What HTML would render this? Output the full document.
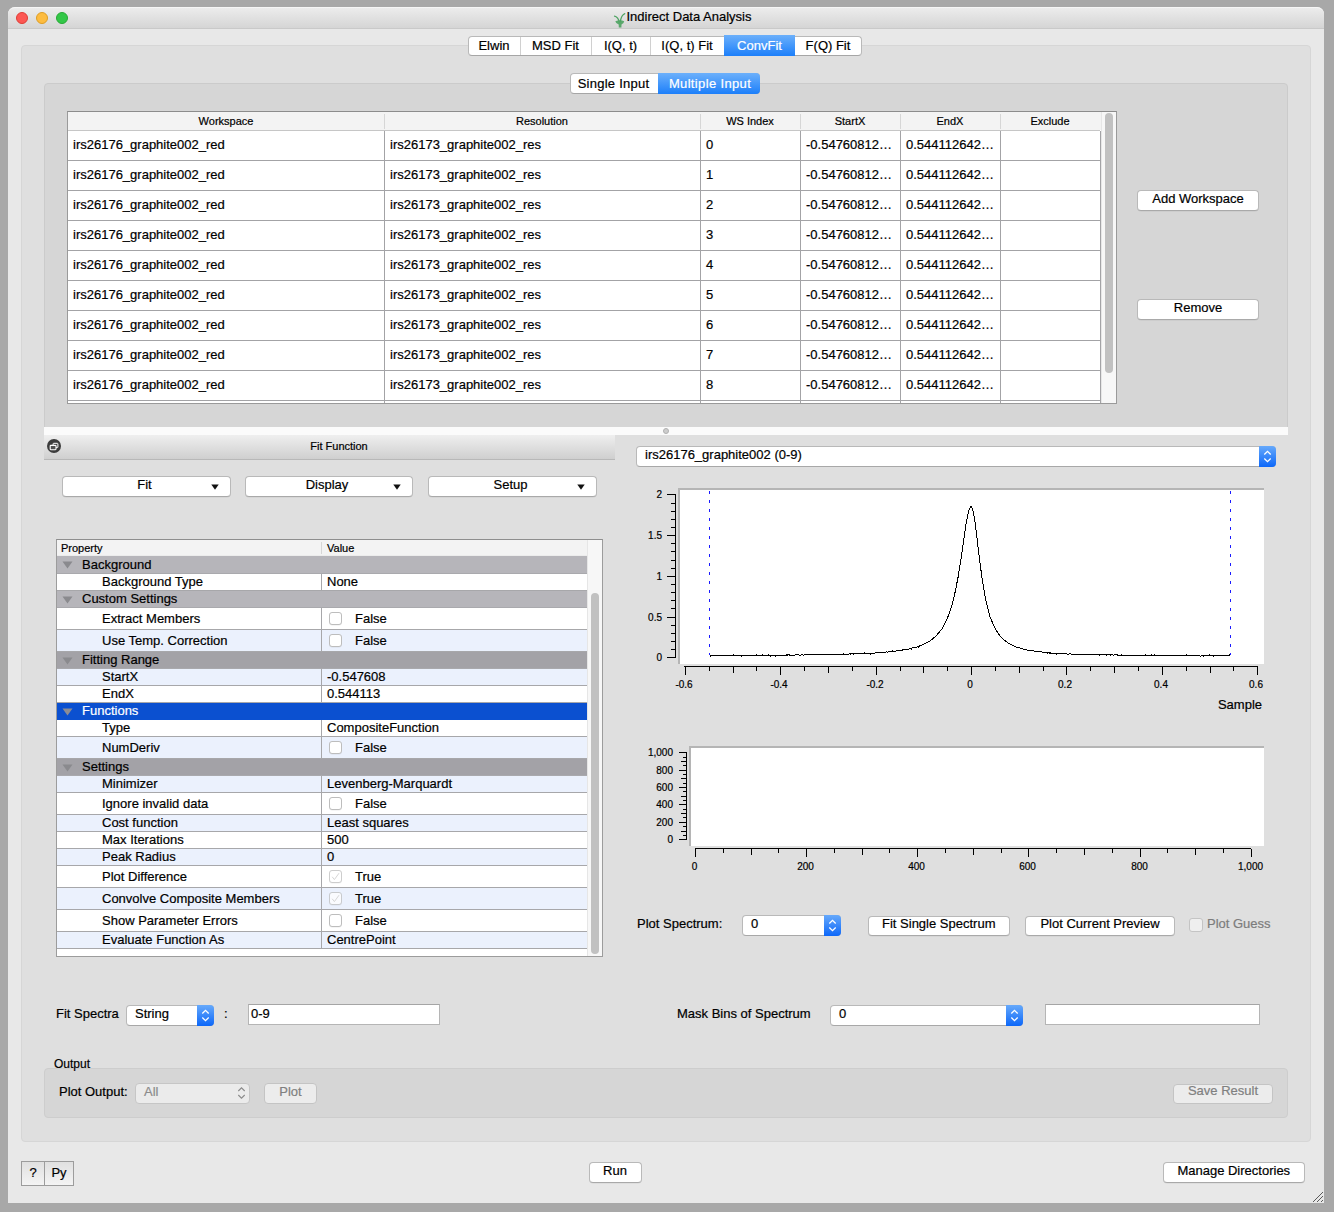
<!DOCTYPE html><html><head><meta charset="utf-8"><style>
html,body{margin:0;padding:0;}
body{width:1334px;height:1212px;background:#a8a8a8;position:relative;overflow:hidden;font-family:"Liberation Sans",sans-serif;color:#000;}
.a{position:absolute;box-sizing:border-box;}
.tx{white-space:nowrap;-webkit-text-stroke:0.2px currentColor;}
.btn{background:#fff;border:1px solid #b9b9b9;border-bottom-color:#a9a9a9;border-radius:4px;box-shadow:0 0.5px 0.5px rgba(0,0,0,0.08);}
.dbtn{background:#ececec;border:1px solid #c4c4c4;border-radius:4px;}
.cb{background:#fff;border:1px solid #b4b4b4;border-radius:3px;}
</style></head><body><div class="a " style="left:8px;top:7px;width:1316px;height:1196px;background:#e8e8e8;border-radius:7px 7px 0 0;"></div>
<div class="a " style="left:8px;top:7px;width:1316px;height:22px;background:linear-gradient(#ececec,#d5d5d5);border-radius:7px 7px 0 0;border-top:1px solid #f6f6f6;border-bottom:1px solid #c9c9c9;"></div>
<div class="a " style="left:16px;top:12px;width:12px;height:12px;background:#fc5753;border:0.5px solid #df3d35;border-radius:50%;"></div>
<div class="a " style="left:36px;top:12px;width:12px;height:12px;background:#fdbc40;border:0.5px solid #de9e25;border-radius:50%;"></div>
<div class="a " style="left:56px;top:12px;width:12px;height:12px;background:#33c748;border:0.5px solid #27aa35;border-radius:50%;"></div>
<svg class="a" style="left:613px;top:12px" width="14" height="17" viewBox="0 0 14 17"><g fill="none" stroke="#4fa463" stroke-width="1.2" stroke-linecap="round"><path d="M1.5 4.2 Q5 5 6.3 10"/><path d="M11.8 1.6 Q8.2 3 7.3 10"/></g><path d="M2.3 9.3 Q7 7.3 11.2 9.3 Q10.8 12 8.5 12.5 L8.4 15.6 L5.8 15.6 L5.7 12.5 Q3 12 2.3 9.3Z" fill="#4fa463" opacity="0.92"/></svg>
<div class="a tx" style="left:626.5px;top:9px;font-size:13px;line-height:15px;">Indirect Data Analysis</div>
<div class="a " style="left:21px;top:45px;width:1290px;height:1097px;background:#dfdfdf;border:1px solid #d6d6d6;border-radius:4px;"></div>
<div class="a " style="left:468px;top:36px;width:394px;height:20px;background:#fff;border:1px solid #b9b9b9;border-bottom-color:#a6a6a6;border-radius:4px;"></div>
<div class="a tx" style="left:194.0px;width:600px;text-align:center;top:38px;font-size:13px;line-height:15px;">Elwin</div>
<div class="a " style="left:520px;top:37px;width:1px;height:18px;background:#d0d0d0;"></div>
<div class="a tx" style="left:255.5px;width:600px;text-align:center;top:38px;font-size:13px;line-height:15px;">MSD Fit</div>
<div class="a " style="left:591px;top:37px;width:1px;height:18px;background:#d0d0d0;"></div>
<div class="a tx" style="left:320.5px;width:600px;text-align:center;top:38px;font-size:13px;line-height:15px;">I(Q, t)</div>
<div class="a " style="left:650px;top:37px;width:1px;height:18px;background:#d0d0d0;"></div>
<div class="a tx" style="left:387.0px;width:600px;text-align:center;top:38px;font-size:13px;line-height:15px;">I(Q, t) Fit</div>
<div class="a " style="left:724px;top:35px;width:71px;height:21px;background:linear-gradient(#6cb0fb,#1c7ffa);"></div>
<div class="a tx" style="left:459.5px;width:600px;text-align:center;top:38px;font-size:13px;line-height:15px;color:#fff">ConvFit</div>
<div class="a tx" style="left:528.0px;width:600px;text-align:center;top:38px;font-size:13px;line-height:15px;">F(Q) Fit</div>
<div class="a " style="left:44px;top:83px;width:1244px;height:350px;background:#d6d6d6;border:1px solid #cbcbcb;border-radius:4px;"></div>
<div class="a " style="left:570px;top:73px;width:190px;height:21px;background:#fff;border:1px solid #b9b9b9;border-bottom-color:#a6a6a6;border-radius:4px;"></div>
<div class="a " style="left:658px;top:73px;width:102px;height:21px;background:linear-gradient(#6cb0fb,#1c7ffa);border-radius:0 4px 4px 0;"></div>
<div class="a tx" style="left:313.5px;width:600px;text-align:center;top:76px;font-size:13px;line-height:15px;letter-spacing:0.25px">Single Input</div>
<div class="a tx" style="left:410px;width:600px;text-align:center;top:76px;font-size:13px;line-height:15px;color:#fff;letter-spacing:0.35px">Multiple Input</div>
<div class="a " style="left:67px;top:111px;width:1050px;height:293px;background:#fff;border:1px solid #9a9a9a;border-top-color:#8c8c8c;"></div>
<div class="a " style="left:68px;top:112px;width:1033px;height:18px;background:#f3f3f3;"></div>
<div class="a " style="left:68px;top:130px;width:1032px;height:1px;background:#c6c6c6;"></div>
<div class="a tx" style="left:-74.0px;width:600px;text-align:center;top:115px;font-size:11px;line-height:13px;">Workspace</div>
<div class="a tx" style="left:242.0px;width:600px;text-align:center;top:115px;font-size:11px;line-height:13px;">Resolution</div>
<div class="a tx" style="left:450.0px;width:600px;text-align:center;top:115px;font-size:11px;line-height:13px;">WS Index</div>
<div class="a tx" style="left:550.0px;width:600px;text-align:center;top:115px;font-size:11px;line-height:13px;">StartX</div>
<div class="a tx" style="left:650.0px;width:600px;text-align:center;top:115px;font-size:11px;line-height:13px;">EndX</div>
<div class="a tx" style="left:750.0px;width:600px;text-align:center;top:115px;font-size:11px;line-height:13px;">Exclude</div>
<div class="a " style="left:384px;top:114px;width:1px;height:15px;background:#d6d6d6;"></div>
<div class="a " style="left:700px;top:114px;width:1px;height:15px;background:#d6d6d6;"></div>
<div class="a " style="left:800px;top:114px;width:1px;height:15px;background:#d6d6d6;"></div>
<div class="a " style="left:900px;top:114px;width:1px;height:15px;background:#d6d6d6;"></div>
<div class="a " style="left:1000px;top:114px;width:1px;height:15px;background:#d6d6d6;"></div>
<div class="a " style="left:384px;top:131px;width:1px;height:272px;background:#a3a3a6;"></div>
<div class="a " style="left:700px;top:131px;width:1px;height:272px;background:#a3a3a6;"></div>
<div class="a " style="left:800px;top:131px;width:1px;height:272px;background:#a3a3a6;"></div>
<div class="a " style="left:900px;top:131px;width:1px;height:272px;background:#a3a3a6;"></div>
<div class="a " style="left:1000px;top:131px;width:1px;height:272px;background:#a3a3a6;"></div>
<div class="a " style="left:1100px;top:131px;width:1px;height:272px;background:#a3a3a6;"></div>
<div class="a " style="left:68px;top:160px;width:1032px;height:1px;background:#a3a3a6;"></div>
<div class="a " style="left:68px;top:190px;width:1032px;height:1px;background:#a3a3a6;"></div>
<div class="a " style="left:68px;top:220px;width:1032px;height:1px;background:#a3a3a6;"></div>
<div class="a " style="left:68px;top:250px;width:1032px;height:1px;background:#a3a3a6;"></div>
<div class="a " style="left:68px;top:280px;width:1032px;height:1px;background:#a3a3a6;"></div>
<div class="a " style="left:68px;top:310px;width:1032px;height:1px;background:#a3a3a6;"></div>
<div class="a " style="left:68px;top:340px;width:1032px;height:1px;background:#a3a3a6;"></div>
<div class="a " style="left:68px;top:370px;width:1032px;height:1px;background:#a3a3a6;"></div>
<div class="a " style="left:68px;top:400px;width:1032px;height:1px;background:#a3a3a6;"></div>
<div class="a tx" style="left:73px;top:137px;font-size:13px;line-height:15px;">irs26176_graphite002_red</div>
<div class="a tx" style="left:390px;top:137px;font-size:13px;line-height:15px;">irs26173_graphite002_res</div>
<div class="a tx" style="left:706px;top:137px;font-size:13px;line-height:15px;">0</div>
<div class="a tx" style="left:806px;top:137px;font-size:13px;line-height:15px;">-0.54760812…</div>
<div class="a tx" style="left:906px;top:137px;font-size:13px;line-height:15px;">0.544112642…</div>
<div class="a tx" style="left:73px;top:167px;font-size:13px;line-height:15px;">irs26176_graphite002_red</div>
<div class="a tx" style="left:390px;top:167px;font-size:13px;line-height:15px;">irs26173_graphite002_res</div>
<div class="a tx" style="left:706px;top:167px;font-size:13px;line-height:15px;">1</div>
<div class="a tx" style="left:806px;top:167px;font-size:13px;line-height:15px;">-0.54760812…</div>
<div class="a tx" style="left:906px;top:167px;font-size:13px;line-height:15px;">0.544112642…</div>
<div class="a tx" style="left:73px;top:197px;font-size:13px;line-height:15px;">irs26176_graphite002_red</div>
<div class="a tx" style="left:390px;top:197px;font-size:13px;line-height:15px;">irs26173_graphite002_res</div>
<div class="a tx" style="left:706px;top:197px;font-size:13px;line-height:15px;">2</div>
<div class="a tx" style="left:806px;top:197px;font-size:13px;line-height:15px;">-0.54760812…</div>
<div class="a tx" style="left:906px;top:197px;font-size:13px;line-height:15px;">0.544112642…</div>
<div class="a tx" style="left:73px;top:227px;font-size:13px;line-height:15px;">irs26176_graphite002_red</div>
<div class="a tx" style="left:390px;top:227px;font-size:13px;line-height:15px;">irs26173_graphite002_res</div>
<div class="a tx" style="left:706px;top:227px;font-size:13px;line-height:15px;">3</div>
<div class="a tx" style="left:806px;top:227px;font-size:13px;line-height:15px;">-0.54760812…</div>
<div class="a tx" style="left:906px;top:227px;font-size:13px;line-height:15px;">0.544112642…</div>
<div class="a tx" style="left:73px;top:257px;font-size:13px;line-height:15px;">irs26176_graphite002_red</div>
<div class="a tx" style="left:390px;top:257px;font-size:13px;line-height:15px;">irs26173_graphite002_res</div>
<div class="a tx" style="left:706px;top:257px;font-size:13px;line-height:15px;">4</div>
<div class="a tx" style="left:806px;top:257px;font-size:13px;line-height:15px;">-0.54760812…</div>
<div class="a tx" style="left:906px;top:257px;font-size:13px;line-height:15px;">0.544112642…</div>
<div class="a tx" style="left:73px;top:287px;font-size:13px;line-height:15px;">irs26176_graphite002_red</div>
<div class="a tx" style="left:390px;top:287px;font-size:13px;line-height:15px;">irs26173_graphite002_res</div>
<div class="a tx" style="left:706px;top:287px;font-size:13px;line-height:15px;">5</div>
<div class="a tx" style="left:806px;top:287px;font-size:13px;line-height:15px;">-0.54760812…</div>
<div class="a tx" style="left:906px;top:287px;font-size:13px;line-height:15px;">0.544112642…</div>
<div class="a tx" style="left:73px;top:317px;font-size:13px;line-height:15px;">irs26176_graphite002_red</div>
<div class="a tx" style="left:390px;top:317px;font-size:13px;line-height:15px;">irs26173_graphite002_res</div>
<div class="a tx" style="left:706px;top:317px;font-size:13px;line-height:15px;">6</div>
<div class="a tx" style="left:806px;top:317px;font-size:13px;line-height:15px;">-0.54760812…</div>
<div class="a tx" style="left:906px;top:317px;font-size:13px;line-height:15px;">0.544112642…</div>
<div class="a tx" style="left:73px;top:347px;font-size:13px;line-height:15px;">irs26176_graphite002_red</div>
<div class="a tx" style="left:390px;top:347px;font-size:13px;line-height:15px;">irs26173_graphite002_res</div>
<div class="a tx" style="left:706px;top:347px;font-size:13px;line-height:15px;">7</div>
<div class="a tx" style="left:806px;top:347px;font-size:13px;line-height:15px;">-0.54760812…</div>
<div class="a tx" style="left:906px;top:347px;font-size:13px;line-height:15px;">0.544112642…</div>
<div class="a tx" style="left:73px;top:377px;font-size:13px;line-height:15px;">irs26176_graphite002_red</div>
<div class="a tx" style="left:390px;top:377px;font-size:13px;line-height:15px;">irs26173_graphite002_res</div>
<div class="a tx" style="left:706px;top:377px;font-size:13px;line-height:15px;">8</div>
<div class="a tx" style="left:806px;top:377px;font-size:13px;line-height:15px;">-0.54760812…</div>
<div class="a tx" style="left:906px;top:377px;font-size:13px;line-height:15px;">0.544112642…</div>
<div class="a " style="left:1101px;top:112px;width:15px;height:291px;background:#f7f7f7;border-left:1px solid #e6e6e6;"></div>
<div class="a " style="left:1105px;top:113px;width:8px;height:260px;background:#c1c1c1;border-radius:4px;"></div>
<div class="a btn" style="left:1137px;top:190px;width:122px;height:21px;"></div>
<div class="a tx" style="left:898.0px;width:600px;text-align:center;top:191px;font-size:13px;line-height:15px;color:#000">Add Workspace</div>
<div class="a btn" style="left:1137px;top:299px;width:122px;height:21px;"></div>
<div class="a tx" style="left:898.0px;width:600px;text-align:center;top:300px;font-size:13px;line-height:15px;color:#000">Remove</div>
<div class="a " style="left:44px;top:427px;width:1244px;height:8px;background:#fbfbfb;"></div>
<div class="a " style="left:663px;top:428px;width:6px;height:6px;background:#cdcdcd;border-radius:50%;border:1px solid #b0b0b0;"></div>
<div class="a " style="left:44px;top:435px;width:571px;height:25px;background:linear-gradient(#efefef,#cfcfcf);border-bottom:1px solid #b8b8b8;"></div>
<svg class="a" style="left:46px;top:438px" width="16" height="16" viewBox="0 0 16 16"><circle cx="8" cy="8" r="7" fill="#3c3c3c"/><rect x="7.1" y="5.3" width="4.8" height="4.3" fill="none" stroke="#fff" stroke-width="1" rx="0.6"/><rect x="4.2" y="7.4" width="5.8" height="4.3" fill="#505050" stroke="#fff" stroke-width="1.1" rx="0.6"/></svg>
<div class="a tx" style="left:39px;width:600px;text-align:center;top:440px;font-size:11px;line-height:13px;">Fit Function</div>
<div class="a btn" style="left:62px;top:476px;width:169px;height:21px;"></div>
<div class="a tx" style="left:-155.5px;width:600px;text-align:center;top:477px;font-size:13px;line-height:15px;">Fit</div>
<svg class="a" style="left:211px;top:484px" width="8" height="6" viewBox="0 0 8 6"><path d="M0.3 0.5 L7.7 0.5 L4 5.8Z" fill="#111"/></svg>
<div class="a btn" style="left:245px;top:476px;width:168px;height:21px;"></div>
<div class="a tx" style="left:27.0px;width:600px;text-align:center;top:477px;font-size:13px;line-height:15px;">Display</div>
<svg class="a" style="left:393px;top:484px" width="8" height="6" viewBox="0 0 8 6"><path d="M0.3 0.5 L7.7 0.5 L4 5.8Z" fill="#111"/></svg>
<div class="a btn" style="left:428px;top:476px;width:169px;height:21px;"></div>
<div class="a tx" style="left:210.5px;width:600px;text-align:center;top:477px;font-size:13px;line-height:15px;">Setup</div>
<svg class="a" style="left:577px;top:484px" width="8" height="6" viewBox="0 0 8 6"><path d="M0.3 0.5 L7.7 0.5 L4 5.8Z" fill="#111"/></svg>
<div class="a " style="left:56px;top:539px;width:547px;height:418px;background:#fff;border:1px solid #9c9c9c;border-top-color:#8e8e8e;"></div>
<div class="a " style="left:57px;top:540px;width:530px;height:16px;background:#f3f3f3;border-bottom:1px solid #ececec;"></div>
<div class="a " style="left:321px;top:542px;width:1px;height:12px;background:#d6d6d6;"></div>
<div class="a tx" style="left:61px;top:542px;font-size:11px;line-height:13px;">Property</div>
<div class="a tx" style="left:327px;top:542px;font-size:11px;line-height:13px;">Value</div>
<div class="a " style="left:57px;top:556px;width:530px;height:18px;background:#b6b5ba;"></div>
<div class="a " style="left:57px;top:573px;width:530px;height:1px;background:#a9a9ad;"></div>
<svg class="a" style="left:62px;top:561px" width="11" height="8" viewBox="0 0 11 8"><path d="M0.5 0.5 L10.5 0.5 L5.5 7.5Z" fill="#8a8a8e"/></svg>
<div class="a tx" style="left:82px;top:557px;font-size:13px;line-height:15px;color:#000">Background</div>
<div class="a " style="left:57px;top:574px;width:530px;height:17px;background:#fff;"></div>
<div class="a " style="left:57px;top:590px;width:530px;height:1px;background:#a7a7aa;"></div>
<div class="a " style="left:321px;top:574px;width:1px;height:17px;background:#a7a7aa;"></div>
<div class="a tx" style="left:102px;top:574px;font-size:13px;line-height:15px;">Background Type</div>
<div class="a tx" style="left:327px;top:574px;font-size:13px;line-height:15px;">None</div>
<div class="a " style="left:57px;top:591px;width:530px;height:17px;background:#b6b5ba;"></div>
<div class="a " style="left:57px;top:607px;width:530px;height:1px;background:#a9a9ad;"></div>
<svg class="a" style="left:62px;top:596px" width="11" height="8" viewBox="0 0 11 8"><path d="M0.5 0.5 L10.5 0.5 L5.5 7.5Z" fill="#8a8a8e"/></svg>
<div class="a tx" style="left:82px;top:591px;font-size:13px;line-height:15px;color:#000">Custom Settings</div>
<div class="a " style="left:57px;top:608px;width:530px;height:22px;background:#fff;"></div>
<div class="a " style="left:57px;top:629px;width:530px;height:1px;background:#a7a7aa;"></div>
<div class="a " style="left:321px;top:608px;width:1px;height:22px;background:#a7a7aa;"></div>
<div class="a tx" style="left:102px;top:611px;font-size:13px;line-height:15px;">Extract Members</div>
<div class="a " style="left:329px;top:612px;width:13px;height:13px;background:#fff;border:1px solid #bdbdbd;border-radius:3px;box-shadow:0 0.5px 0 rgba(0,0,0,0.08);"></div>
<div class="a tx" style="left:355px;top:611px;font-size:13px;line-height:15px;">False</div>
<div class="a " style="left:57px;top:630px;width:530px;height:22px;background:#ebf1fd;"></div>
<div class="a " style="left:57px;top:651px;width:530px;height:1px;background:#a7a7aa;"></div>
<div class="a " style="left:321px;top:630px;width:1px;height:22px;background:#a7a7aa;"></div>
<div class="a tx" style="left:102px;top:633px;font-size:13px;line-height:15px;">Use Temp. Correction</div>
<div class="a " style="left:329px;top:634px;width:13px;height:13px;background:#fff;border:1px solid #bdbdbd;border-radius:3px;box-shadow:0 0.5px 0 rgba(0,0,0,0.08);"></div>
<div class="a tx" style="left:355px;top:633px;font-size:13px;line-height:15px;">False</div>
<div class="a " style="left:57px;top:652px;width:530px;height:17px;background:#a3a2a7;"></div>
<div class="a " style="left:57px;top:668px;width:530px;height:1px;background:#a9a9ad;"></div>
<svg class="a" style="left:62px;top:657px" width="11" height="8" viewBox="0 0 11 8"><path d="M0.5 0.5 L10.5 0.5 L5.5 7.5Z" fill="#8a8a8e"/></svg>
<div class="a tx" style="left:82px;top:652px;font-size:13px;line-height:15px;color:#000">Fitting Range</div>
<div class="a " style="left:57px;top:669px;width:530px;height:17px;background:#ebf1fd;"></div>
<div class="a " style="left:57px;top:685px;width:530px;height:1px;background:#a7a7aa;"></div>
<div class="a " style="left:321px;top:669px;width:1px;height:17px;background:#a7a7aa;"></div>
<div class="a tx" style="left:102px;top:669px;font-size:13px;line-height:15px;">StartX</div>
<div class="a tx" style="left:327px;top:669px;font-size:13px;line-height:15px;">-0.547608</div>
<div class="a " style="left:57px;top:686px;width:530px;height:17px;background:#fff;"></div>
<div class="a " style="left:57px;top:702px;width:530px;height:1px;background:#a7a7aa;"></div>
<div class="a " style="left:321px;top:686px;width:1px;height:17px;background:#a7a7aa;"></div>
<div class="a tx" style="left:102px;top:686px;font-size:13px;line-height:15px;">EndX</div>
<div class="a tx" style="left:327px;top:686px;font-size:13px;line-height:15px;">0.544113</div>
<div class="a " style="left:57px;top:703px;width:530px;height:17px;background:#0b50d0;"></div>
<svg class="a" style="left:62px;top:708px" width="11" height="8" viewBox="0 0 11 8"><path d="M0.5 0.5 L10.5 0.5 L5.5 7.5Z" fill="#8c8c94"/></svg>
<div class="a tx" style="left:82px;top:703px;font-size:13px;line-height:15px;color:#fff">Functions</div>
<div class="a " style="left:57px;top:720px;width:530px;height:17px;background:#fff;"></div>
<div class="a " style="left:57px;top:736px;width:530px;height:1px;background:#a7a7aa;"></div>
<div class="a " style="left:321px;top:720px;width:1px;height:17px;background:#a7a7aa;"></div>
<div class="a tx" style="left:102px;top:720px;font-size:13px;line-height:15px;">Type</div>
<div class="a tx" style="left:327px;top:720px;font-size:13px;line-height:15px;">CompositeFunction</div>
<div class="a " style="left:57px;top:737px;width:530px;height:22px;background:#ebf1fd;"></div>
<div class="a " style="left:57px;top:758px;width:530px;height:1px;background:#a7a7aa;"></div>
<div class="a " style="left:321px;top:737px;width:1px;height:22px;background:#a7a7aa;"></div>
<div class="a tx" style="left:102px;top:740px;font-size:13px;line-height:15px;">NumDeriv</div>
<div class="a " style="left:329px;top:741px;width:13px;height:13px;background:#fff;border:1px solid #bdbdbd;border-radius:3px;box-shadow:0 0.5px 0 rgba(0,0,0,0.08);"></div>
<div class="a tx" style="left:355px;top:740px;font-size:13px;line-height:15px;">False</div>
<div class="a " style="left:57px;top:759px;width:530px;height:17px;background:#a3a2a7;"></div>
<div class="a " style="left:57px;top:775px;width:530px;height:1px;background:#a9a9ad;"></div>
<svg class="a" style="left:62px;top:764px" width="11" height="8" viewBox="0 0 11 8"><path d="M0.5 0.5 L10.5 0.5 L5.5 7.5Z" fill="#8a8a8e"/></svg>
<div class="a tx" style="left:82px;top:759px;font-size:13px;line-height:15px;color:#000">Settings</div>
<div class="a " style="left:57px;top:776px;width:530px;height:17px;background:#ebf1fd;"></div>
<div class="a " style="left:57px;top:792px;width:530px;height:1px;background:#a7a7aa;"></div>
<div class="a " style="left:321px;top:776px;width:1px;height:17px;background:#a7a7aa;"></div>
<div class="a tx" style="left:102px;top:776px;font-size:13px;line-height:15px;">Minimizer</div>
<div class="a tx" style="left:327px;top:776px;font-size:13px;line-height:15px;">Levenberg-Marquardt</div>
<div class="a " style="left:57px;top:793px;width:530px;height:22px;background:#fff;"></div>
<div class="a " style="left:57px;top:814px;width:530px;height:1px;background:#a7a7aa;"></div>
<div class="a " style="left:321px;top:793px;width:1px;height:22px;background:#a7a7aa;"></div>
<div class="a tx" style="left:102px;top:796px;font-size:13px;line-height:15px;">Ignore invalid data</div>
<div class="a " style="left:329px;top:797px;width:13px;height:13px;background:#fff;border:1px solid #bdbdbd;border-radius:3px;box-shadow:0 0.5px 0 rgba(0,0,0,0.08);"></div>
<div class="a tx" style="left:355px;top:796px;font-size:13px;line-height:15px;">False</div>
<div class="a " style="left:57px;top:815px;width:530px;height:17px;background:#ebf1fd;"></div>
<div class="a " style="left:57px;top:831px;width:530px;height:1px;background:#a7a7aa;"></div>
<div class="a " style="left:321px;top:815px;width:1px;height:17px;background:#a7a7aa;"></div>
<div class="a tx" style="left:102px;top:815px;font-size:13px;line-height:15px;">Cost function</div>
<div class="a tx" style="left:327px;top:815px;font-size:13px;line-height:15px;">Least squares</div>
<div class="a " style="left:57px;top:832px;width:530px;height:17px;background:#fff;"></div>
<div class="a " style="left:57px;top:848px;width:530px;height:1px;background:#a7a7aa;"></div>
<div class="a " style="left:321px;top:832px;width:1px;height:17px;background:#a7a7aa;"></div>
<div class="a tx" style="left:102px;top:832px;font-size:13px;line-height:15px;">Max Iterations</div>
<div class="a tx" style="left:327px;top:832px;font-size:13px;line-height:15px;">500</div>
<div class="a " style="left:57px;top:849px;width:530px;height:17px;background:#ebf1fd;"></div>
<div class="a " style="left:57px;top:865px;width:530px;height:1px;background:#a7a7aa;"></div>
<div class="a " style="left:321px;top:849px;width:1px;height:17px;background:#a7a7aa;"></div>
<div class="a tx" style="left:102px;top:849px;font-size:13px;line-height:15px;">Peak Radius</div>
<div class="a tx" style="left:327px;top:849px;font-size:13px;line-height:15px;">0</div>
<div class="a " style="left:57px;top:866px;width:530px;height:22px;background:#fff;"></div>
<div class="a " style="left:57px;top:887px;width:530px;height:1px;background:#a7a7aa;"></div>
<div class="a " style="left:321px;top:866px;width:1px;height:22px;background:#a7a7aa;"></div>
<div class="a tx" style="left:102px;top:869px;font-size:13px;line-height:15px;">Plot Difference</div>
<div class="a " style="left:329px;top:870px;width:13px;height:13px;background:#fff;border:1px solid #bdbdbd;border-radius:3px;box-shadow:0 0.5px 0 rgba(0,0,0,0.08);opacity:0.75;"></div>
<svg class="a" style="left:330px;top:871px" width="11" height="11" viewBox="0 0 11 11"><path d="M2.2 5.8 L4.4 8.6 L9 2.2" fill="none" stroke="#d6d6d6" stroke-width="1"/></svg>
<div class="a tx" style="left:355px;top:869px;font-size:13px;line-height:15px;">True</div>
<div class="a " style="left:57px;top:888px;width:530px;height:22px;background:#ebf1fd;"></div>
<div class="a " style="left:57px;top:909px;width:530px;height:1px;background:#a7a7aa;"></div>
<div class="a " style="left:321px;top:888px;width:1px;height:22px;background:#a7a7aa;"></div>
<div class="a tx" style="left:102px;top:891px;font-size:13px;line-height:15px;">Convolve Composite Members</div>
<div class="a " style="left:329px;top:892px;width:13px;height:13px;background:#fff;border:1px solid #bdbdbd;border-radius:3px;box-shadow:0 0.5px 0 rgba(0,0,0,0.08);opacity:0.75;"></div>
<svg class="a" style="left:330px;top:893px" width="11" height="11" viewBox="0 0 11 11"><path d="M2.2 5.8 L4.4 8.6 L9 2.2" fill="none" stroke="#d6d6d6" stroke-width="1"/></svg>
<div class="a tx" style="left:355px;top:891px;font-size:13px;line-height:15px;">True</div>
<div class="a " style="left:57px;top:910px;width:530px;height:22px;background:#fff;"></div>
<div class="a " style="left:57px;top:931px;width:530px;height:1px;background:#a7a7aa;"></div>
<div class="a " style="left:321px;top:910px;width:1px;height:22px;background:#a7a7aa;"></div>
<div class="a tx" style="left:102px;top:913px;font-size:13px;line-height:15px;">Show Parameter Errors</div>
<div class="a " style="left:329px;top:914px;width:13px;height:13px;background:#fff;border:1px solid #bdbdbd;border-radius:3px;box-shadow:0 0.5px 0 rgba(0,0,0,0.08);"></div>
<div class="a tx" style="left:355px;top:913px;font-size:13px;line-height:15px;">False</div>
<div class="a " style="left:57px;top:932px;width:530px;height:17px;background:#ebf1fd;"></div>
<div class="a " style="left:57px;top:948px;width:530px;height:1px;background:#a7a7aa;"></div>
<div class="a " style="left:321px;top:932px;width:1px;height:17px;background:#a7a7aa;"></div>
<div class="a tx" style="left:102px;top:932px;font-size:13px;line-height:15px;">Evaluate Function As</div>
<div class="a tx" style="left:327px;top:932px;font-size:13px;line-height:15px;">CentrePoint</div>
<div class="a " style="left:587px;top:540px;width:15px;height:416px;background:#f7f7f7;border-left:1px solid #e6e6e6;"></div>
<div class="a " style="left:591px;top:593px;width:8px;height:361px;background:#c1c1c1;border-radius:4px;"></div>
<div class="a " style="left:636px;top:446px;width:640px;height:21px;background:#fff;border:1px solid #b9b9b9;border-bottom-color:#a8a8a8;border-radius:4px;"></div>
<div class="a " style="left:1259px;top:446px;width:17px;height:21px;background:linear-gradient(#66a9fb,#0c67f9);border-radius:0 4px 4px 0;"></div>
<svg class="a" style="left:1259px;top:446px" width="17" height="21" viewBox="0 0 17 21"><path d="M5.3 8.5 L8.5 5.3 L11.7 8.5 M5.3 12.5 L8.5 15.7 L11.7 12.5" fill="none" stroke="#fff" stroke-width="1.3"/></svg>
<div class="a tx" style="left:645px;top:447px;font-size:13px;line-height:15px;">irs26176_graphite002 (0-9)</div>
<div class="a " style="left:678px;top:488px;width:586px;height:176px;background:#fff;border-top:2px solid #b5b5b5;border-left:2px solid #b5b5b5;"></div>
<div class="a tx" style="left:362px;width:300px;text-align:right;top:652px;font-size:10px;line-height:12px;">0</div>
<div class="a tx" style="left:362px;width:300px;text-align:right;top:612px;font-size:10px;line-height:12px;">0.5</div>
<div class="a tx" style="left:362px;width:300px;text-align:right;top:571px;font-size:10px;line-height:12px;">1</div>
<div class="a tx" style="left:362px;width:300px;text-align:right;top:530px;font-size:10px;line-height:12px;">1.5</div>
<div class="a tx" style="left:362px;width:300px;text-align:right;top:489px;font-size:10px;line-height:12px;">2</div>
<div class="a tx" style="left:384px;width:600px;text-align:center;top:679px;font-size:10px;line-height:12px;">-0.6</div>
<div class="a tx" style="left:479px;width:600px;text-align:center;top:679px;font-size:10px;line-height:12px;">-0.4</div>
<div class="a tx" style="left:575px;width:600px;text-align:center;top:679px;font-size:10px;line-height:12px;">-0.2</div>
<div class="a tx" style="left:670px;width:600px;text-align:center;top:679px;font-size:10px;line-height:12px;">0</div>
<div class="a tx" style="left:765px;width:600px;text-align:center;top:679px;font-size:10px;line-height:12px;">0.2</div>
<div class="a tx" style="left:861px;width:600px;text-align:center;top:679px;font-size:10px;line-height:12px;">0.4</div>
<div class="a tx" style="left:956px;width:600px;text-align:center;top:679px;font-size:10px;line-height:12px;">0.6</div>
<div class="a tx" style="left:962px;width:300px;text-align:right;top:697px;font-size:13px;line-height:15px;">Sample</div>
<svg class="a" style="left:0;top:0" width="1334" height="1212" viewBox="0 0 1334 1212" shape-rendering="crispEdges"><line x1="675.5" y1="493.9" x2="675.5" y2="657.9" stroke="#000" stroke-width="1"/><line x1="667.0" y1="657.5" x2="675.5" y2="657.5" stroke="#000" stroke-width="1"/><line x1="671.0" y1="649.5" x2="675.5" y2="649.5" stroke="#000" stroke-width="1"/><line x1="671.0" y1="641.5" x2="675.5" y2="641.5" stroke="#000" stroke-width="1"/><line x1="671.0" y1="633.5" x2="675.5" y2="633.5" stroke="#000" stroke-width="1"/><line x1="671.0" y1="625.5" x2="675.5" y2="625.5" stroke="#000" stroke-width="1"/><line x1="667.0" y1="617.5" x2="675.5" y2="617.5" stroke="#000" stroke-width="1"/><line x1="671.0" y1="608.5" x2="675.5" y2="608.5" stroke="#000" stroke-width="1"/><line x1="671.0" y1="600.5" x2="675.5" y2="600.5" stroke="#000" stroke-width="1"/><line x1="671.0" y1="592.5" x2="675.5" y2="592.5" stroke="#000" stroke-width="1"/><line x1="671.0" y1="584.5" x2="675.5" y2="584.5" stroke="#000" stroke-width="1"/><line x1="667.0" y1="576.5" x2="675.5" y2="576.5" stroke="#000" stroke-width="1"/><line x1="671.0" y1="568.5" x2="675.5" y2="568.5" stroke="#000" stroke-width="1"/><line x1="671.0" y1="560.5" x2="675.5" y2="560.5" stroke="#000" stroke-width="1"/><line x1="671.0" y1="551.5" x2="675.5" y2="551.5" stroke="#000" stroke-width="1"/><line x1="671.0" y1="543.5" x2="675.5" y2="543.5" stroke="#000" stroke-width="1"/><line x1="667.0" y1="535.5" x2="675.5" y2="535.5" stroke="#000" stroke-width="1"/><line x1="671.0" y1="527.5" x2="675.5" y2="527.5" stroke="#000" stroke-width="1"/><line x1="671.0" y1="519.5" x2="675.5" y2="519.5" stroke="#000" stroke-width="1"/><line x1="671.0" y1="511.5" x2="675.5" y2="511.5" stroke="#000" stroke-width="1"/><line x1="671.0" y1="503.5" x2="675.5" y2="503.5" stroke="#000" stroke-width="1"/><line x1="667.0" y1="494.5" x2="675.5" y2="494.5" stroke="#000" stroke-width="1"/><line x1="684.46" y1="666.5" x2="1257.74" y2="666.5" stroke="#000" stroke-width="1"/><line x1="685.5" y1="666.5" x2="685.5" y2="674.5" stroke="#000" stroke-width="1"/><line x1="709.5" y1="666.5" x2="709.5" y2="670.5" stroke="#000" stroke-width="1"/><line x1="733.5" y1="666.5" x2="733.5" y2="672.5" stroke="#000" stroke-width="1"/><line x1="756.5" y1="666.5" x2="756.5" y2="670.5" stroke="#000" stroke-width="1"/><line x1="780.5" y1="666.5" x2="780.5" y2="674.5" stroke="#000" stroke-width="1"/><line x1="804.5" y1="666.5" x2="804.5" y2="670.5" stroke="#000" stroke-width="1"/><line x1="828.5" y1="666.5" x2="828.5" y2="672.5" stroke="#000" stroke-width="1"/><line x1="852.5" y1="666.5" x2="852.5" y2="670.5" stroke="#000" stroke-width="1"/><line x1="876.5" y1="666.5" x2="876.5" y2="674.5" stroke="#000" stroke-width="1"/><line x1="900.5" y1="666.5" x2="900.5" y2="670.5" stroke="#000" stroke-width="1"/><line x1="923.5" y1="666.5" x2="923.5" y2="672.5" stroke="#000" stroke-width="1"/><line x1="947.5" y1="666.5" x2="947.5" y2="670.5" stroke="#000" stroke-width="1"/><line x1="971.5" y1="666.5" x2="971.5" y2="674.5" stroke="#000" stroke-width="1"/><line x1="995.5" y1="666.5" x2="995.5" y2="670.5" stroke="#000" stroke-width="1"/><line x1="1019.5" y1="666.5" x2="1019.5" y2="672.5" stroke="#000" stroke-width="1"/><line x1="1043.5" y1="666.5" x2="1043.5" y2="670.5" stroke="#000" stroke-width="1"/><line x1="1066.5" y1="666.5" x2="1066.5" y2="674.5" stroke="#000" stroke-width="1"/><line x1="1090.5" y1="666.5" x2="1090.5" y2="670.5" stroke="#000" stroke-width="1"/><line x1="1114.5" y1="666.5" x2="1114.5" y2="672.5" stroke="#000" stroke-width="1"/><line x1="1138.5" y1="666.5" x2="1138.5" y2="670.5" stroke="#000" stroke-width="1"/><line x1="1162.5" y1="666.5" x2="1162.5" y2="674.5" stroke="#000" stroke-width="1"/><line x1="1186.5" y1="666.5" x2="1186.5" y2="670.5" stroke="#000" stroke-width="1"/><line x1="1210.5" y1="666.5" x2="1210.5" y2="672.5" stroke="#000" stroke-width="1"/><line x1="1233.5" y1="666.5" x2="1233.5" y2="670.5" stroke="#000" stroke-width="1"/><line x1="1257.5" y1="666.5" x2="1257.5" y2="674.5" stroke="#000" stroke-width="1"/></svg>
<svg class="a" style="left:0;top:0" width="1334" height="1212" viewBox="0 0 1334 1212"><polyline fill="none" stroke="#000" stroke-width="1" shape-rendering="optimizeSpeed" points="709.9,655.6 710.5,655.6 711.0,656.4 711.5,655.4 712.0,655.6 712.6,655.5 713.1,655.5 713.6,655.6 714.1,655.4 714.7,655.4 715.2,655.6 715.7,655.5 716.2,655.6 716.8,655.5 717.3,655.4 717.8,655.4 718.3,655.4 718.9,655.3 719.4,655.6 719.9,655.6 720.4,655.5 721.0,655.5 721.5,655.5 722.0,655.4 722.5,655.3 723.1,655.3 723.6,655.3 724.1,655.6 724.6,655.3 725.2,655.4 725.7,655.6 726.2,655.4 726.7,655.6 727.3,655.3 727.8,655.4 728.3,655.6 728.8,655.4 729.4,655.6 729.9,655.6 730.4,655.5 730.9,655.3 731.5,655.3 732.0,655.6 732.5,655.6 733.0,655.5 733.6,654.8 734.1,655.5 734.6,655.3 735.1,655.4 735.7,655.4 736.2,655.4 736.7,655.3 737.2,655.4 737.8,655.5 738.3,655.3 738.8,655.6 739.3,655.2 739.9,655.1 740.4,655.4 740.9,655.4 741.4,656.2 741.9,655.3 742.5,655.5 743.0,655.4 743.5,655.4 744.0,655.4 744.6,655.4 745.1,655.2 745.6,655.3 746.1,655.5 746.7,655.5 747.2,655.4 747.7,655.5 748.2,655.4 748.8,655.4 749.3,655.5 749.8,655.3 750.3,655.4 750.9,655.5 751.4,655.4 751.9,655.2 752.4,655.4 753.0,655.3 753.5,655.4 754.0,655.4 754.5,655.4 755.1,655.4 755.6,655.4 756.1,654.6 756.6,655.2 757.2,655.3 757.7,655.2 758.2,655.2 758.7,655.2 759.3,655.4 759.8,655.2 760.3,655.4 760.8,655.4 761.4,655.2 761.9,655.2 762.4,654.8 762.9,655.4 763.5,655.2 764.0,655.3 764.5,655.2 765.0,655.3 765.6,655.3 766.1,655.3 766.6,655.2 767.1,655.4 767.7,655.1 768.2,654.9 768.7,655.6 769.2,655.3 769.8,655.3 770.3,656.0 770.8,655.3 771.3,655.4 771.9,655.1 772.4,655.2 772.9,655.3 773.4,655.2 773.9,655.2 774.5,655.3 775.0,655.2 775.5,655.9 776.0,655.2 776.6,655.1 777.1,655.1 777.6,655.2 778.1,655.2 778.7,655.2 779.2,655.2 779.7,655.1 780.2,655.3 780.8,655.2 781.3,655.0 781.8,655.0 782.3,655.2 782.9,655.3 783.4,655.1 783.9,655.0 784.4,655.0 785.0,655.2 785.5,655.3 786.0,655.8 786.5,655.2 787.1,654.5 787.6,655.2 788.1,655.0 788.6,654.9 789.2,654.5 789.7,655.1 790.2,655.2 790.7,655.3 791.3,655.0 791.8,655.1 792.3,655.1 792.8,655.0 793.4,655.1 793.9,655.1 794.4,655.2 794.9,654.9 795.5,654.9 796.0,654.9 796.5,654.9 797.0,655.0 797.6,654.9 798.1,655.1 798.6,654.8 799.1,655.0 799.7,655.1 800.2,655.1 800.7,655.0 801.2,654.9 801.8,655.0 802.3,655.0 802.8,654.9 803.3,655.1 803.9,655.0 804.4,655.0 804.9,654.8 805.4,654.7 805.9,654.9 806.5,654.8 807.0,654.9 807.5,654.8 808.0,654.9 808.6,654.7 809.1,654.9 809.6,654.8 810.1,654.7 810.7,654.9 811.2,654.9 811.7,654.8 812.2,654.7 812.8,654.7 813.3,654.8 813.8,654.9 814.3,654.7 814.9,654.8 815.4,655.0 815.9,654.8 816.4,654.8 817.0,654.6 817.5,654.7 818.0,654.8 818.5,654.8 819.1,654.6 819.6,654.6 820.1,654.6 820.6,654.8 821.2,654.6 821.7,654.7 822.2,654.5 822.7,654.6 823.3,654.6 823.8,654.6 824.3,654.6 824.8,654.6 825.4,654.7 825.9,654.5 826.4,654.4 826.9,654.6 827.5,654.5 828.0,654.5 828.5,654.6 829.0,654.7 829.6,654.4 830.1,654.4 830.6,654.6 831.1,654.4 831.7,654.6 832.2,654.5 832.7,654.5 833.2,654.4 833.8,654.3 834.3,654.5 834.8,654.5 835.3,654.3 835.9,654.5 836.4,654.3 836.9,654.3 837.4,654.5 837.9,654.4 838.5,654.3 839.0,654.4 839.5,654.5 840.0,654.2 840.6,654.3 841.1,654.2 841.6,654.1 842.1,654.3 842.7,654.2 843.2,653.6 843.7,654.1 844.2,654.2 844.8,654.3 845.3,654.3 845.8,654.1 846.3,654.1 846.9,654.0 847.4,654.0 847.9,654.2 848.4,654.1 849.0,653.9 849.5,653.9 850.0,654.1 850.5,654.0 851.1,653.9 851.6,654.0 852.1,653.8 852.6,653.9 853.2,653.9 853.7,654.6 854.2,654.0 854.7,653.8 855.3,653.9 855.8,653.9 856.3,653.7 856.8,653.9 857.4,653.7 857.9,653.8 858.4,653.7 858.9,653.9 859.5,653.6 860.0,653.7 860.5,653.7 861.0,653.6 861.6,653.7 862.1,653.7 862.6,653.8 863.1,653.6 863.7,653.6 864.2,652.6 864.7,653.5 865.2,653.4 865.8,653.4 866.3,653.1 866.8,653.4 867.3,653.3 867.9,653.4 868.4,653.4 868.9,653.2 869.4,653.4 869.9,653.0 870.5,654.1 871.0,654.1 871.5,653.1 872.0,653.2 872.6,653.1 873.1,652.9 873.6,653.1 874.1,652.9 874.7,653.1 875.2,652.8 875.7,652.9 876.2,652.8 876.8,652.9 877.3,652.7 877.8,652.7 878.3,652.7 878.9,652.7 879.4,652.6 879.9,652.7 880.4,652.5 881.0,652.5 881.5,652.6 882.0,652.6 882.5,652.3 883.1,652.5 883.6,652.2 884.1,652.1 884.6,652.2 885.2,652.1 885.7,652.4 886.2,651.9 886.7,652.0 887.3,652.1 887.8,652.7 888.3,651.8 888.8,652.0 889.4,651.6 889.9,651.7 890.4,651.6 890.9,651.5 891.5,651.7 892.0,651.6 892.5,650.7 893.0,651.5 893.6,651.5 894.1,651.4 894.6,651.2 895.1,651.1 895.7,651.1 896.2,651.0 896.7,650.8 897.2,650.8 897.8,650.8 898.3,651.0 898.8,650.6 899.3,650.5 899.9,650.5 900.4,650.5 900.9,650.2 901.4,650.3 901.9,650.3 902.5,650.0 903.0,649.9 903.5,649.9 904.0,649.8 904.6,649.6 905.1,649.5 905.6,649.5 906.1,649.3 906.7,649.4 907.2,649.4 907.7,649.1 908.2,649.0 908.8,649.1 909.3,648.9 909.8,648.8 910.3,648.5 910.9,648.6 911.4,649.0 911.9,648.1 912.4,647.9 913.0,647.8 913.5,647.9 914.0,647.7 914.5,647.5 915.1,647.3 915.6,647.2 916.1,647.0 916.6,647.0 917.2,646.9 917.7,646.6 918.2,647.1 918.7,646.1 919.3,645.9 919.8,646.3 920.3,645.8 920.8,645.4 921.4,645.4 921.9,645.1 922.4,644.8 922.9,644.7 923.5,644.3 924.0,644.0 924.5,643.9 925.0,643.5 925.6,643.3 926.1,643.1 926.6,642.6 927.1,642.4 927.7,642.2 928.2,641.8 928.7,641.6 929.2,641.3 929.8,641.0 930.3,640.4 930.8,640.2 931.3,639.9 931.9,639.5 932.4,639.2 932.9,638.6 933.4,638.1 933.9,637.6 934.5,637.5 935.0,636.8 935.5,636.4 936.0,635.7 936.6,635.3 937.1,634.8 937.6,634.0 938.1,633.7 938.7,633.1 939.2,632.2 939.7,631.7 940.2,630.8 940.8,630.3 941.3,629.6 941.8,629.1 942.3,628.0 942.9,627.0 943.4,626.1 943.9,625.4 944.4,624.6 945.0,623.3 945.5,622.8 946.0,621.0 946.5,619.9 947.1,618.7 947.6,617.5 948.1,616.4 948.6,615.0 949.2,613.4 949.7,612.2 950.2,610.5 950.7,609.0 951.3,607.0 951.8,605.5 952.3,603.6 952.8,602.1 953.4,599.4 953.9,597.3 954.4,595.3 954.9,592.9 955.5,590.9 956.0,587.9 956.5,585.3 957.0,582.6 957.6,579.8 958.1,577.0 958.6,573.7 959.1,570.8 959.7,567.3 960.2,564.1 960.7,560.8 961.2,557.2 961.8,553.0 962.3,549.8 962.8,546.2 963.3,542.5 963.9,538.9 964.4,535.4 964.9,531.8 965.4,528.3 965.9,525.0 966.5,521.6 967.0,518.7 967.5,516.2 968.0,513.8 968.6,511.6 969.1,509.9 969.6,508.5 970.1,507.5 970.7,506.9 971.2,506.6 971.7,507.2 972.2,508.4 972.8,509.8 973.3,512.2 973.8,514.8 974.3,517.9 974.9,521.4 975.4,525.2 975.9,529.2 976.4,533.5 977.0,537.8 977.5,542.2 978.0,546.6 978.5,551.2 979.1,555.4 979.6,559.9 980.1,563.9 980.6,567.8 981.2,571.7 981.7,575.4 982.2,579.2 982.7,582.7 983.3,585.9 983.8,588.9 984.3,592.1 984.8,594.8 985.4,597.6 985.9,600.2 986.4,602.6 986.9,604.8 987.5,606.9 988.0,608.9 988.5,611.0 989.0,612.7 989.6,614.5 990.1,617.0 990.6,617.7 991.1,619.1 991.7,620.7 992.2,621.9 992.7,623.3 993.2,624.6 993.8,625.8 994.3,626.7 994.8,627.9 995.3,628.7 995.9,629.6 996.4,630.4 996.9,631.4 997.4,632.3 997.9,633.1 998.5,633.7 999.0,634.4 999.5,635.0 1000.0,636.0 1000.6,636.4 1001.1,636.9 1001.6,637.4 1002.1,638.2 1002.7,638.6 1003.2,639.2 1003.7,639.6 1004.2,640.1 1004.8,640.5 1005.3,641.0 1005.8,641.2 1006.3,641.8 1006.9,642.1 1007.4,642.5 1007.9,642.9 1008.4,643.1 1009.0,643.4 1009.5,643.7 1010.0,644.0 1010.5,644.5 1011.1,644.5 1011.6,644.9 1012.1,645.0 1012.6,645.5 1013.2,645.5 1013.7,645.7 1014.2,646.2 1014.7,646.4 1015.3,646.5 1015.8,646.7 1016.3,647.0 1016.8,647.0 1017.4,647.3 1017.9,647.4 1018.4,647.8 1018.9,647.8 1019.5,647.9 1020.0,648.2 1020.5,648.2 1021.0,648.2 1021.6,648.6 1022.1,648.8 1022.6,649.0 1023.1,649.0 1023.7,649.3 1024.2,649.4 1024.7,649.5 1025.2,649.6 1025.8,649.6 1026.3,649.9 1026.8,650.0 1027.3,650.1 1027.9,650.1 1028.4,650.1 1028.9,650.8 1029.4,650.5 1029.9,650.6 1030.5,650.6 1031.0,650.8 1031.5,650.9 1032.0,650.8 1032.6,651.0 1033.1,650.9 1033.6,651.0 1034.1,651.1 1034.7,651.3 1035.2,651.2 1035.7,651.3 1036.2,651.4 1036.8,651.5 1037.3,651.5 1037.8,651.7 1038.3,651.8 1038.9,651.9 1039.4,651.8 1039.9,652.1 1040.4,651.9 1041.0,652.0 1041.5,651.9 1042.0,652.1 1042.5,652.3 1043.1,652.2 1043.6,652.4 1044.1,652.2 1044.6,652.4 1045.2,652.6 1045.7,652.4 1046.2,652.7 1046.7,652.6 1047.3,653.6 1047.8,652.6 1048.3,652.7 1048.8,652.7 1049.4,653.2 1049.9,652.8 1050.4,653.0 1050.9,653.0 1051.5,653.1 1052.0,653.0 1052.5,653.1 1053.0,653.1 1053.6,653.1 1054.1,653.2 1054.6,653.2 1055.1,653.3 1055.7,653.2 1056.2,654.3 1056.7,653.4 1057.2,653.3 1057.8,653.3 1058.3,653.4 1058.8,653.4 1059.3,653.0 1059.9,653.5 1060.4,653.4 1060.9,653.5 1061.4,653.7 1061.9,653.7 1062.5,653.5 1063.0,653.7 1063.5,653.8 1064.0,653.8 1064.6,653.9 1065.1,653.6 1065.6,653.9 1066.1,653.9 1066.7,653.9 1067.2,654.0 1067.7,654.0 1068.2,654.0 1068.8,654.0 1069.3,653.9 1069.8,653.9 1070.3,653.9 1070.9,653.9 1071.4,654.7 1071.9,654.0 1072.4,654.1 1073.0,654.1 1073.5,654.1 1074.0,654.3 1074.5,654.1 1075.1,654.2 1075.6,654.2 1076.1,654.1 1076.6,654.2 1077.2,654.8 1077.7,654.2 1078.2,654.3 1078.7,654.4 1079.3,654.3 1079.8,654.2 1080.3,654.4 1080.8,654.5 1081.4,654.3 1081.9,654.3 1082.4,654.5 1082.9,654.5 1083.5,654.4 1084.0,654.5 1084.5,654.4 1085.0,654.4 1085.6,654.6 1086.1,654.4 1086.6,654.3 1087.1,654.4 1087.7,654.4 1088.2,654.6 1088.7,654.4 1089.2,654.5 1089.8,654.6 1090.3,654.4 1090.8,654.7 1091.3,654.5 1091.9,654.7 1092.4,654.5 1092.9,654.8 1093.4,654.7 1093.9,654.5 1094.5,654.8 1095.0,654.8 1095.5,654.5 1096.0,654.6 1096.6,654.8 1097.1,654.7 1097.6,654.8 1098.1,654.8 1098.7,654.6 1099.2,655.1 1099.7,654.9 1100.2,654.6 1100.8,654.6 1101.3,654.9 1101.8,654.9 1102.3,654.9 1102.9,654.7 1103.4,654.7 1103.9,654.8 1104.4,654.7 1105.0,654.9 1105.5,654.8 1106.0,655.0 1106.5,655.0 1107.1,654.9 1107.6,654.9 1108.1,655.0 1108.6,654.9 1109.2,655.0 1109.7,654.8 1110.2,654.8 1110.7,655.1 1111.3,654.8 1111.8,655.0 1112.3,654.8 1112.8,655.0 1113.4,655.1 1113.9,655.0 1114.4,655.0 1114.9,654.9 1115.5,654.8 1116.0,654.9 1116.5,654.9 1117.0,655.2 1117.6,654.9 1118.1,654.9 1118.6,655.2 1119.1,655.2 1119.7,655.1 1120.2,655.0 1120.7,655.0 1121.2,655.1 1121.8,654.9 1122.3,655.2 1122.8,655.2 1123.3,655.2 1123.9,655.0 1124.4,655.0 1124.9,655.0 1125.4,655.1 1125.9,655.7 1126.5,655.1 1127.0,655.2 1127.5,655.3 1128.0,655.2 1128.6,655.1 1129.1,655.1 1129.6,655.0 1130.1,655.3 1130.7,655.0 1131.2,655.2 1131.7,655.1 1132.2,655.2 1132.8,655.1 1133.3,655.3 1133.8,655.1 1134.3,655.2 1134.9,655.2 1135.4,655.3 1135.9,655.2 1136.4,655.1 1137.0,655.2 1137.5,655.2 1138.0,655.2 1138.5,655.2 1139.1,655.3 1139.6,655.3 1140.1,655.4 1140.6,655.3 1141.2,655.4 1141.7,655.4 1142.2,655.9 1142.7,655.4 1143.3,655.3 1143.8,655.3 1144.3,655.2 1144.8,655.5 1145.4,654.7 1145.9,655.4 1146.4,655.3 1146.9,655.3 1147.5,655.3 1148.0,655.5 1148.5,655.4 1149.0,656.3 1149.6,655.4 1150.1,655.2 1150.6,655.4 1151.1,654.8 1151.7,655.4 1152.2,655.5 1152.7,655.4 1153.2,655.2 1153.8,655.5 1154.3,654.5 1154.8,655.2 1155.3,655.3 1155.9,655.2 1156.4,655.4 1156.9,655.5 1157.4,655.5 1157.9,655.4 1158.5,655.3 1159.0,655.7 1159.5,655.4 1160.0,655.3 1160.6,655.3 1161.1,655.3 1161.6,655.4 1162.1,655.3 1162.7,655.4 1163.2,655.5 1163.7,655.6 1164.2,655.4 1164.8,655.4 1165.3,655.3 1165.8,655.4 1166.3,655.3 1166.9,655.3 1167.4,655.3 1167.9,655.5 1168.4,655.4 1169.0,655.4 1169.5,655.3 1170.0,655.5 1170.5,655.4 1171.1,655.4 1171.6,655.4 1172.1,655.5 1172.6,655.3 1173.2,655.5 1173.7,655.4 1174.2,655.4 1174.7,655.4 1175.3,655.5 1175.8,655.5 1176.3,655.4 1176.8,655.6 1177.4,655.3 1177.9,655.5 1178.4,655.6 1178.9,655.4 1179.5,655.5 1180.0,655.6 1180.5,655.6 1181.0,655.4 1181.6,655.4 1182.1,655.5 1182.6,655.4 1183.1,655.4 1183.7,655.3 1184.2,655.7 1184.7,655.4 1185.2,655.6 1185.8,655.6 1186.3,654.6 1186.8,655.7 1187.3,655.4 1187.9,655.5 1188.4,655.5 1188.9,655.4 1189.4,655.5 1189.9,655.6 1190.5,655.4 1191.0,655.7 1191.5,655.6 1192.0,655.6 1192.6,655.4 1193.1,655.4 1193.6,655.4 1194.1,655.6 1194.7,655.6 1195.2,655.7 1195.7,655.5 1196.2,655.4 1196.8,655.6 1197.3,655.6 1197.8,655.6 1198.3,655.6 1198.9,655.6 1199.4,655.7 1199.9,655.5 1200.4,656.3 1201.0,656.3 1201.5,655.5 1202.0,655.5 1202.5,655.6 1203.1,655.5 1203.6,656.4 1204.1,655.7 1204.6,655.7 1205.2,655.6 1205.7,655.5 1206.2,655.5 1206.7,655.7 1207.3,655.5 1207.8,655.5 1208.3,655.6 1208.8,655.7 1209.4,655.5 1209.9,654.5 1210.4,655.7 1210.9,655.5 1211.5,655.6 1212.0,655.7 1212.5,655.7 1213.0,654.7 1213.6,656.1 1214.1,655.8 1214.6,655.5 1215.1,655.6 1215.7,655.5 1216.2,655.6 1216.7,655.7 1217.2,655.7 1217.8,655.7 1218.3,655.6 1218.8,655.7 1219.3,655.6 1219.9,655.6 1220.4,655.7 1220.9,655.6 1221.4,655.6 1221.9,655.6 1222.5,655.6 1223.0,655.6 1223.5,655.5 1224.0,655.5 1224.6,655.6 1225.1,656.1 1225.6,655.5 1226.1,655.6 1226.7,655.7 1227.2,655.6 1227.7,655.6 1228.2,655.7 1228.8,655.6 1229.3,654.6 1229.8,655.6 1230.3,655.7"/><line x1="709.5" y1="491" x2="709.5" y2="655" stroke="#1a1aff" stroke-width="1" stroke-dasharray="3,6"/><line x1="1230.5" y1="491" x2="1230.5" y2="655" stroke="#1a1aff" stroke-width="1" stroke-dasharray="3,6"/></svg>
<div class="a " style="left:689px;top:746px;width:575px;height:100px;background:#fff;border-top:2px solid #b5b5b5;border-left:2px solid #b5b5b5;"></div>
<div class="a tx" style="left:373px;width:300px;text-align:right;top:834px;font-size:10px;line-height:12px;">0</div>
<div class="a tx" style="left:373px;width:300px;text-align:right;top:817px;font-size:10px;line-height:12px;">200</div>
<div class="a tx" style="left:373px;width:300px;text-align:right;top:799px;font-size:10px;line-height:12px;">400</div>
<div class="a tx" style="left:373px;width:300px;text-align:right;top:782px;font-size:10px;line-height:12px;">600</div>
<div class="a tx" style="left:373px;width:300px;text-align:right;top:765px;font-size:10px;line-height:12px;">800</div>
<div class="a tx" style="left:373px;width:300px;text-align:right;top:747px;font-size:10px;line-height:12px;">1,000</div>
<div class="a tx" style="left:394.5px;width:600px;text-align:center;top:861px;font-size:10px;line-height:12px;">0</div>
<div class="a tx" style="left:505.5px;width:600px;text-align:center;top:861px;font-size:10px;line-height:12px;">200</div>
<div class="a tx" style="left:616.5px;width:600px;text-align:center;top:861px;font-size:10px;line-height:12px;">400</div>
<div class="a tx" style="left:727.5px;width:600px;text-align:center;top:861px;font-size:10px;line-height:12px;">600</div>
<div class="a tx" style="left:839.5px;width:600px;text-align:center;top:861px;font-size:10px;line-height:12px;">800</div>
<div class="a tx" style="left:950.5px;width:600px;text-align:center;top:861px;font-size:10px;line-height:12px;">1,000</div>
<svg class="a" style="left:0;top:0" width="1334" height="1212" viewBox="0 0 1334 1212" shape-rendering="crispEdges"><line x1="686.5" y1="751.8000000000001" x2="686.5" y2="839.7" stroke="#000" stroke-width="1"/><line x1="678.5" y1="839.5" x2="686.5" y2="839.5" stroke="#000" stroke-width="1"/><line x1="682.5" y1="835.5" x2="686.5" y2="835.5" stroke="#000" stroke-width="1"/><line x1="680.5" y1="831.5" x2="686.5" y2="831.5" stroke="#000" stroke-width="1"/><line x1="682.5" y1="826.5" x2="686.5" y2="826.5" stroke="#000" stroke-width="1"/><line x1="678.5" y1="822.5" x2="686.5" y2="822.5" stroke="#000" stroke-width="1"/><line x1="682.5" y1="817.5" x2="686.5" y2="817.5" stroke="#000" stroke-width="1"/><line x1="680.5" y1="813.5" x2="686.5" y2="813.5" stroke="#000" stroke-width="1"/><line x1="682.5" y1="809.5" x2="686.5" y2="809.5" stroke="#000" stroke-width="1"/><line x1="678.5" y1="804.5" x2="686.5" y2="804.5" stroke="#000" stroke-width="1"/><line x1="682.5" y1="800.5" x2="686.5" y2="800.5" stroke="#000" stroke-width="1"/><line x1="680.5" y1="796.5" x2="686.5" y2="796.5" stroke="#000" stroke-width="1"/><line x1="682.5" y1="791.5" x2="686.5" y2="791.5" stroke="#000" stroke-width="1"/><line x1="678.5" y1="787.5" x2="686.5" y2="787.5" stroke="#000" stroke-width="1"/><line x1="682.5" y1="783.5" x2="686.5" y2="783.5" stroke="#000" stroke-width="1"/><line x1="680.5" y1="778.5" x2="686.5" y2="778.5" stroke="#000" stroke-width="1"/><line x1="682.5" y1="774.5" x2="686.5" y2="774.5" stroke="#000" stroke-width="1"/><line x1="678.5" y1="770.5" x2="686.5" y2="770.5" stroke="#000" stroke-width="1"/><line x1="682.5" y1="765.5" x2="686.5" y2="765.5" stroke="#000" stroke-width="1"/><line x1="680.5" y1="761.5" x2="686.5" y2="761.5" stroke="#000" stroke-width="1"/><line x1="682.5" y1="757.5" x2="686.5" y2="757.5" stroke="#000" stroke-width="1"/><line x1="678.5" y1="752.5" x2="686.5" y2="752.5" stroke="#000" stroke-width="1"/><line x1="694.5" y1="848.5" x2="1251.1999999999998" y2="848.5" stroke="#000" stroke-width="1"/><line x1="695.5" y1="848.5" x2="695.5" y2="856.5" stroke="#000" stroke-width="1"/><line x1="723.5" y1="848.5" x2="723.5" y2="852.5" stroke="#000" stroke-width="1"/><line x1="751.5" y1="848.5" x2="751.5" y2="854.5" stroke="#000" stroke-width="1"/><line x1="778.5" y1="848.5" x2="778.5" y2="852.5" stroke="#000" stroke-width="1"/><line x1="806.5" y1="848.5" x2="806.5" y2="856.5" stroke="#000" stroke-width="1"/><line x1="834.5" y1="848.5" x2="834.5" y2="852.5" stroke="#000" stroke-width="1"/><line x1="862.5" y1="848.5" x2="862.5" y2="854.5" stroke="#000" stroke-width="1"/><line x1="889.5" y1="848.5" x2="889.5" y2="852.5" stroke="#000" stroke-width="1"/><line x1="917.5" y1="848.5" x2="917.5" y2="856.5" stroke="#000" stroke-width="1"/><line x1="945.5" y1="848.5" x2="945.5" y2="852.5" stroke="#000" stroke-width="1"/><line x1="973.5" y1="848.5" x2="973.5" y2="854.5" stroke="#000" stroke-width="1"/><line x1="1001.5" y1="848.5" x2="1001.5" y2="852.5" stroke="#000" stroke-width="1"/><line x1="1028.5" y1="848.5" x2="1028.5" y2="856.5" stroke="#000" stroke-width="1"/><line x1="1056.5" y1="848.5" x2="1056.5" y2="852.5" stroke="#000" stroke-width="1"/><line x1="1084.5" y1="848.5" x2="1084.5" y2="854.5" stroke="#000" stroke-width="1"/><line x1="1112.5" y1="848.5" x2="1112.5" y2="852.5" stroke="#000" stroke-width="1"/><line x1="1140.5" y1="848.5" x2="1140.5" y2="856.5" stroke="#000" stroke-width="1"/><line x1="1167.5" y1="848.5" x2="1167.5" y2="852.5" stroke="#000" stroke-width="1"/><line x1="1195.5" y1="848.5" x2="1195.5" y2="854.5" stroke="#000" stroke-width="1"/><line x1="1223.5" y1="848.5" x2="1223.5" y2="852.5" stroke="#000" stroke-width="1"/><line x1="1251.5" y1="848.5" x2="1251.5" y2="856.5" stroke="#000" stroke-width="1"/></svg>
<div class="a tx" style="left:637px;top:916px;font-size:13px;line-height:15px;">Plot Spectrum:</div>
<div class="a " style="left:742px;top:915px;width:99px;height:21px;background:#fff;border:1px solid #b9b9b9;border-bottom-color:#a8a8a8;border-radius:4px;"></div>
<div class="a " style="left:824px;top:915px;width:17px;height:21px;background:linear-gradient(#66a9fb,#0c67f9);border-radius:0 4px 4px 0;"></div>
<svg class="a" style="left:824px;top:915px" width="17" height="21" viewBox="0 0 17 21"><path d="M5.3 8.5 L8.5 5.3 L11.7 8.5 M5.3 12.5 L8.5 15.7 L11.7 12.5" fill="none" stroke="#fff" stroke-width="1.3"/></svg>
<div class="a tx" style="left:751px;top:916px;font-size:13px;line-height:15px;">0</div>
<div class="a btn" style="left:867.5px;top:916px;width:142.5px;height:20px;"></div>
<div class="a tx" style="left:638.75px;width:600px;text-align:center;top:916px;font-size:13px;line-height:15px;color:#000">Fit Single Spectrum</div>
<div class="a btn" style="left:1025px;top:916px;width:150px;height:20px;"></div>
<div class="a tx" style="left:800.0px;width:600px;text-align:center;top:916px;font-size:13px;line-height:15px;color:#000">Plot Current Preview</div>
<div class="a " style="left:1189px;top:918px;width:14px;height:14px;background:#efefef;border:1px solid #c4c4c4;border-radius:3px;"></div>
<div class="a tx" style="left:1207px;top:916px;font-size:13px;line-height:15px;color:#7c7c7c">Plot Guess</div>
<div class="a tx" style="left:56px;top:1006px;font-size:13px;line-height:15px;">Fit Spectra</div>
<div class="a " style="left:126px;top:1005px;width:88px;height:21px;background:#fff;border:1px solid #b9b9b9;border-bottom-color:#a8a8a8;border-radius:4px;"></div>
<div class="a " style="left:197px;top:1005px;width:17px;height:21px;background:linear-gradient(#66a9fb,#0c67f9);border-radius:0 4px 4px 0;"></div>
<svg class="a" style="left:197px;top:1005px" width="17" height="21" viewBox="0 0 17 21"><path d="M5.3 8.5 L8.5 5.3 L11.7 8.5 M5.3 12.5 L8.5 15.7 L11.7 12.5" fill="none" stroke="#fff" stroke-width="1.3"/></svg>
<div class="a tx" style="left:135px;top:1006px;font-size:13px;line-height:15px;">String</div>
<div class="a tx" style="left:224px;top:1006px;font-size:13px;line-height:15px;">:</div>
<div class="a " style="left:248px;top:1004px;width:192px;height:21px;background:#fff;border:1px solid #b5b5b5;border-top-color:#a5a5a5;"></div>
<div class="a tx" style="left:251px;top:1006px;font-size:13px;line-height:15px;">0-9</div>
<div class="a tx" style="left:677px;top:1006px;font-size:13px;line-height:15px;">Mask Bins of Spectrum</div>
<div class="a " style="left:830px;top:1005px;width:193px;height:21px;background:#fff;border:1px solid #b9b9b9;border-bottom-color:#a8a8a8;border-radius:4px;"></div>
<div class="a " style="left:1006px;top:1005px;width:17px;height:21px;background:linear-gradient(#66a9fb,#0c67f9);border-radius:0 4px 4px 0;"></div>
<svg class="a" style="left:1006px;top:1005px" width="17" height="21" viewBox="0 0 17 21"><path d="M5.3 8.5 L8.5 5.3 L11.7 8.5 M5.3 12.5 L8.5 15.7 L11.7 12.5" fill="none" stroke="#fff" stroke-width="1.3"/></svg>
<div class="a tx" style="left:839px;top:1006px;font-size:13px;line-height:15px;">0</div>
<div class="a " style="left:1045px;top:1004px;width:215px;height:21px;background:#fff;border:1px solid #b5b5b5;border-top-color:#a5a5a5;"></div>
<div class="a " style="left:44px;top:1068px;width:1244px;height:50px;background:#d6d6d6;border:1px solid #cdcdcd;border-radius:4px;"></div>
<div class="a tx" style="left:54px;top:1057px;font-size:12px;line-height:14px;">Output</div>
<div class="a tx" style="left:59px;top:1084px;font-size:13px;line-height:15px;">Plot Output:</div>
<div class="a " style="left:135px;top:1083px;width:115px;height:21px;background:#ebebeb;border:1px solid #c6c6c6;border-radius:4px;"></div>
<div class="a tx" style="left:144px;top:1084px;font-size:13px;line-height:15px;color:#8c8c8c">All</div>
<svg class="a" style="left:237px;top:1086px" width="9" height="14" viewBox="0 0 9 14"><path d="M1.3 5 L4.5 1.8 L7.7 5 M1.3 9 L4.5 12.2 L7.7 9" fill="none" stroke="#8a8a8a" stroke-width="1.1"/></svg>
<div class="a dbtn" style="left:264px;top:1083px;width:53px;height:21px;"></div>
<div class="a tx" style="left:-9.5px;width:600px;text-align:center;top:1084px;font-size:13px;line-height:15px;color:#808080">Plot</div>
<div class="a dbtn" style="left:1173px;top:1083.5px;width:100px;height:20px;"></div>
<div class="a tx" style="left:923px;width:600px;text-align:center;top:1083px;font-size:13px;line-height:15px;color:#808080">Save Result</div>
<div class="a " style="left:21px;top:1161px;width:53px;height:25px;background:linear-gradient(#e0e0e0,#f4f4f4);border:1px solid #9c9c9c;"></div>
<div class="a " style="left:44px;top:1161px;width:1px;height:25px;background:#9c9c9c;"></div>
<div class="a tx" style="left:-267px;width:600px;text-align:center;top:1165px;font-size:13px;line-height:15px;">?</div>
<div class="a tx" style="left:-241px;width:600px;text-align:center;top:1165px;font-size:13px;line-height:15px;">Py</div>
<div class="a btn" style="left:588.5px;top:1162px;width:53.0px;height:20.5px;"></div>
<div class="a tx" style="left:315.0px;width:600px;text-align:center;top:1163px;font-size:13px;line-height:15px;color:#000">Run</div>
<div class="a btn" style="left:1162.5px;top:1162px;width:142.5px;height:20.5px;"></div>
<div class="a tx" style="left:933.75px;width:600px;text-align:center;top:1163px;font-size:13px;line-height:15px;color:#000">Manage Directories</div>
<svg class="a" style="left:1310px;top:1189px" width="14" height="14" viewBox="0 0 14 14"><path d="M3 13 L13 3 M7 13 L13 7 M11 13 L13 11" stroke="#5a5a5a" stroke-width="1"/></svg></body></html>
